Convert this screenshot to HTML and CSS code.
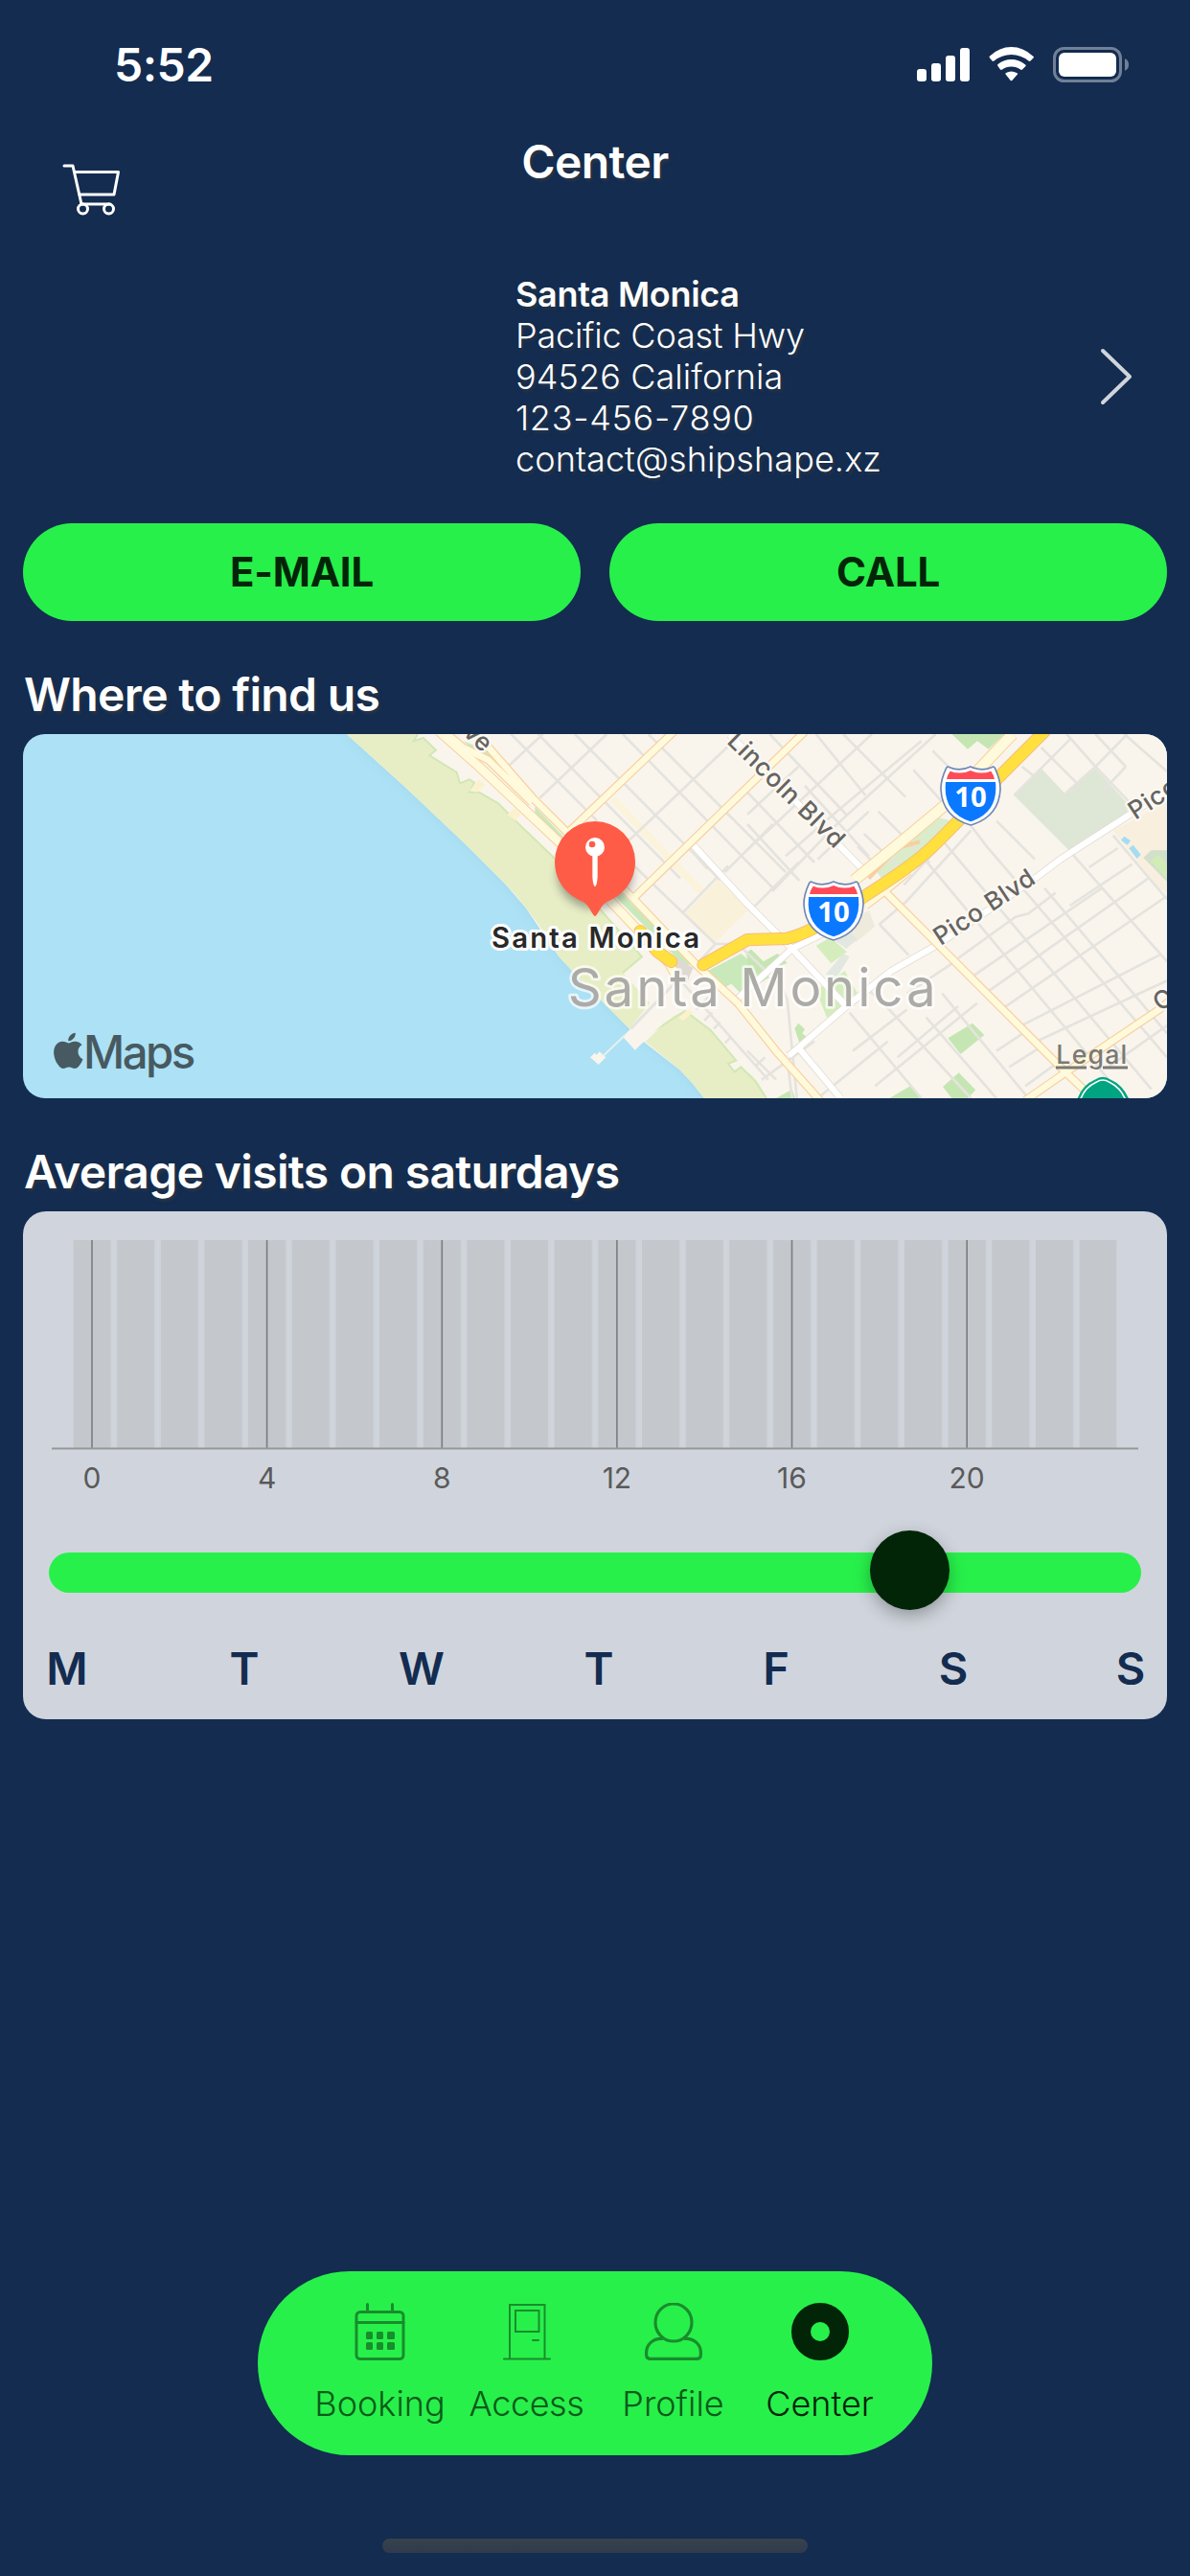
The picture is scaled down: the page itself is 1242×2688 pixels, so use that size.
FILE: index.html
```html
<!DOCTYPE html>
<html lang="en">
<head>
    <meta charset="UTF-8">
    <meta name="viewport" content="width=device-width, initial-scale=1.0">
    <title>Center</title>
    <link rel="stylesheet" href="styles.css">
</head>
<body>
    <div class="status-bar">
        <div class="time">5:52</div>
        <svg class="status-icons" viewBox="0 0 222 40">
            <g fill="#fff">
                <rect x="0" y="24" width="10" height="13" rx="3"/>
                <rect x="15" y="18" width="10" height="19" rx="3"/>
                <rect x="30" y="10" width="10" height="27" rx="3"/>
                <rect x="45" y="2" width="10" height="35" rx="3"/>
                <path d="M76 12.500Q75 11.500 76 10.500Q86 1 98.500 1T121 10.500Q123 11.500 121.500 12.500L118.500 15.600Q117.500 16.500 116.500 15.600Q108.500 9 98.500 9T80.500 15.600Q79.500 16.500 78.500 15.600Z"/>
                <path d="M84.500 21Q83.500 20 84.500 19Q91 14 98.500 14T112.500 19Q114.500 20 113.500 21L110 24.500Q109 25.300 108 24.500Q104 21.500 98.500 21.500T89 24.500Q88 25.300 87 24.500Z"/>
                <path d="M92.500 29.500Q92 28.500 93 28Q98.500 25 104 28Q106 28.500 105 29.500L99.500 35.700Q98.500 37 97.500 35.700Z"/>
                <rect x="148" y="7" width="60" height="25" rx="6"/>
            </g>
            <g opacity=".4">
                <rect x="143.500" y="2.500" width="69" height="34" rx="10" fill="none" stroke="#fff" stroke-width="3"/>
                <path d="M217 13Q221 15 221 19.500T217 26Z" fill="#fff"/>
            </g>
        </svg>
    </div>

    <div class="nav">
        <svg class="cart" viewBox="0 0 62 56" fill="none" stroke="#fff" stroke-width="3" stroke-linecap="round" stroke-linejoin="round">
            <path d="M2 3H11L20 43H50M13 9.500H58.500L54 33H17.500"/>
            <circle cx="21.500" cy="48" r="5"/>
            <circle cx="48.500" cy="48" r="5"/>
        </svg>
        <div class="nav-title">Center</div>
    </div>

    <div class="contact">
        <div class="address">
            <div class="name">Santa Monica</div>
            <div>Pacific Coast Hwy</div>
            <div class="zip">94526 California</div>
            <div class="phone">123-456-7890</div>
            <div class="mail">contact@shipshape.xz</div>
        </div>
        <svg class="chevron" viewBox="0 0 34 60" fill="none" stroke="#d0d5dc" stroke-width="4" stroke-linecap="round" stroke-linejoin="round">
            <path d="M3 3L31 30L3 57"/>
        </svg>
    </div>

    <div class="buttons">
        <button class="email">E-MAIL</button>
        <button class="call">CALL</button>
    </div>

    <h2 class="find">Where to find us</h2>
    <svg class="map" viewBox="-948 48 3582 1140">
        <defs>
            <g id="interstate">
                <path d="M-66-90Q-34-76 0-92Q34-76 66-90Q72-94 76-88Q94-50 93-20Q88 66 0 91Q-88 66-93-20Q-94-50-76-88Q-72-94-66-90Z" fill="#fff" stroke="#6f87b5" stroke-width="5"/>
                <path d="M-75-53Q-74-64-64-78Q-30-66 0-80Q30-66 64-78Q74-64 75-53Z" fill="#ff4b57"/>
                <path d="M-78-44H78Q88 52 0 80Q-88 52-78-44Z" fill="#0b79ff"/>
                <text class="shield-num" x="0" y="34" text-anchor="middle">10</text>
            </g>
            <filter id="soft" x="-50%" y="-50%" width="200%" height="200%">
                <feGaussianBlur stdDeviation="14"/>
            </filter>
        </defs>

        <!-- water, land, beach -->
        <rect x="-948" y="48" width="3582" height="1140" fill="#ade1f5"/>
        <path d="M65 48L250 215L440 395L560 515L625 590L730 745L800 820L950 970L1000 1015L1110 1100L1185 1188H1500V48Z" fill="#9ad3e8" opacity=".6" filter="url(#soft)"/>
        <path d="M65 48L250 215L440 395L560 515L625 590L730 745L800 820L950 970L1000 1015L1110 1100Q1150 1140 1185 1188H2634V48Z" fill="#f9f5ed"/>
        <g fill="#e7eec5">
            <path d="M65 48L250 215L440 395L560 515Q600 555 625 590Q690 670 730 745L800 820L950 970L1015 890L930 795L990 745L730 450L600 325L540 265L480 230L450 230L465 200L450 190L420 202L410 168L325 115L345 98L305 60L275 70L288 48Z"/>
            <path d="M1000 1010L1090 930L1125 915L1205 975L1285 1070L1260 1080L1280 1105L1300 1090L1345 1135L1380 1188H1185Q1150 1140 1110 1100Z"/>
            <path d="M1320 1105Q1365 1140 1375 1188H1320Z"/>
        </g>
        <path d="M288 48L275 70L305 60L345 98L325 115L410 168L420 202L450 190L465 200L450 230H480L540 265L600 325L730 450L990 745L930 795M1015 985L1125 915L1205 975L1285 1070L1260 1080L1280 1105L1300 1090L1345 1135L1380 1188" fill="none" stroke="#d2e7b4" stroke-width="6"/>
        <g fill="#fbf2cd">
            <path d="M450 225L480 190L500 208L472 230Z"/>
            <path d="M568 300L590 280L610 300L595 320Z"/>
            <path d="M1105 935L1135 908L1150 920L1118 946Z"/>
            <path d="M890 255L910 245L1185 535L1168 550Z" opacity=".6"/>
        </g>
        <path d="M930 995L1090 835L1115 900L968 1037ZM828 1060L842 1046L848 1052L857 1042L877 1060L854 1083Z" fill="#f9f5ed"/>
        <path d="M935 992L868 1056" stroke="#e8f0ee" stroke-width="6"/>
        <path d="M955 970L1095 825" stroke="#e5e3de" stroke-width="9"/>

        <!-- parks and blocks -->
        <path d="M1125 608L1228 502L1322 600L1215 705Z" fill="#faf1da"/>
        <g fill="#cae9bb">
            <path d="M655 275L750 375H715L655 300Z"/>
            <path d="M430 70L510 100L645 240V255L520 145Z"/>
            <path d="M910 530L1150 770H1120L910 560Z"/>
            <path d="M1195 790L1300 735L1390 810L1300 860L1270 830L1240 845Z"/>
            <path d="M1315 740L1332 722L1385 775L1360 800Z"/>
        </g>
        <path d="M1095 745L1150 780L1130 830L1090 790Z" fill="#dedad3"/>
        <g transform="translate(1320 0)">
            <path d="M835 240L920 155L995 235L1090 155L1190 265V310L1010 415Z" fill="#dee6d6"/>
            <path d="M1145 350L1314 258V550L1290 530Z" fill="#f8efdf"/>
            <path d="M1240 435L1265 412H1314V510Z" fill="#d2dfcb"/>
            <path d="M1262 445L1285 425L1314 452V500Z" fill="#d2ecb8"/>
            <path d="M1170 380L1180 368L1200 382L1190 395ZM1195 405L1208 395L1232 425L1220 438Z" fill="#a3dcf3"/>
            <path d="M215 710L260 685L312 730L262 766Z" fill="#d5edbd"/>
            <path d="M290 650L380 600L400 650L340 700Z" fill="#eeebdc"/>
            <path d="M275 695L320 665L345 690L310 720ZM245 800L300 735L320 745L270 825Z" fill="#e2e8df"/>
            <path d="M215 850L305 790L345 860L250 938Z" fill="#d5edbd"/>
            <g fill="#c5e6b2">
                <path d="M640 48H805L755 95L720 70L690 95Z"/>
                <path d="M628 1000L705 953L742 990L668 1050Z"/>
                <path d="M612 1152L662 1108L715 1162L690 1188H640Z"/>
                <path d="M445 1188L510 1150L548 1188Z"/>
                <path d="M148 970L160 953L180 972L172 985L190 1000L165 1020Z"/>
                <path d="M90 1188L140 1160L150 1188Z"/>
                <path d="M400 470L600 310L680 330L560 440L420 500Z" opacity=".6"/>
                <path d="M0 730L12 722L50 760L95 735L125 765L30 800L0 770Z"/>
            </g>
        </g>

        <!-- minor streets -->
        <g class="minor">
            <path d="M570 150L680 48M670 248L880 48M950 380L1300 48M1195 470L1160 430M1250 480L1400 330M1115 610L1260 460M1340 590L1480 450"/>
            <path d="M580 48L850 320M665 48L1110 500M780 48L1235 505M930 48L1400 530M1010 48L1440 480M960 455L1220 705M1160 770L1220 705H1290L1390 800"/>
            <path d="M1120 830L1385 1130M1185 945L1210 920M1215 970L1235 950M1250 1015L1270 995M1348 1085L1375 1060M1160 910L1200 870"/>
            <path d="M1390 48L1630 300M1535 48L1690 240M1620 48L1815 245M1320 230L1530 450M1320 330L1483 507M1500 210L1700 430M1730 290L1890 450M1685 360L1790 460M1665 400L1740 475M1840 160L1930 260M1900 100L2000 200"/>
            <path d="M1320 410L1710 48M1320 300L1480 150M1398 540L1590 340L1910 48M1440 430L1600 290L1865 70M1540 440L1700 290"/>
        </g>
        <g class="minor" transform="translate(1320 0)">
            <path d="M555 440L1180 1188M610 380L1265 1160M700 335L750 400L1314 1060M780 320L900 440M930 530L1314 985M1010 415L1314 760M1145 365L1314 565M860 150L910 190M920 90L1030 200M1000 48L1090 150L1200 265M1090 48L1185 150M1180 48L1314 165M1185 150L1110 230"/>
            <path d="M700 350L500 570L412 645M620 380L490 520M1090 150L1190 48M995 235L1090 150M835 240L1010 65M1070 465L1160 405M1010 585L1205 455M660 750L840 620L880 610L965 545M700 810L1110 530M745 860L1255 500M795 910L1314 555M850 965L1290 740M905 1010L1314 820M1130 1090L1314 960"/>
            <path d="M415 645L505 740M610 860L880 1188M560 935L780 1188M320 920L545 1188M380 850L435 900L700 1188M500 860L650 760M400 1150L720 890M470 1060L660 900M330 1040L500 910M780 1040L870 980M820 1090L915 1030M870 1150L960 1085M230 1180L440 1010M280 1140L390 1050M0 1040L90 1130M45 1130L210 1010M90 790L125 880L155 1188M125 1070L140 1188"/>
        </g>

        <!-- white roads -->
        <g fill="none" stroke-linejoin="round">
            <g stroke="#e3ddd2" stroke-width="24">
                <path d="M1150 395L1320 580L1460 720L1630 900M1480 1030L1630 900L1770 790L1920 705L2220 500L2300 440L2634 225M1280 885L1460 720L1560 670M1450 1055L1480 1030L1612 1188M1265 50L1690 480"/>
            </g>
            <g stroke="#fff" stroke-width="19">
                <path d="M1150 395L1320 580L1460 720L1630 900M1480 1030L1630 900L1770 790L1920 705L2220 500L2300 440L2634 225M1280 885L1460 720L1560 670M1450 1055L1480 1030L1612 1188M1265 50L1690 480"/>
            </g>
        </g>

        <!-- arterial roads: casing then fill -->
        <g fill="none" stroke="#f8cfa0" stroke-linejoin="round">
            <path d="M355 40L480 150L740 395L900 580L1075 765L1110 830" stroke-width="32"/>
            <path d="M510 90L650 250L760 360L960 560L1160 770L1290 890L1410 1040L1550 1198M380 48L430 90L510 130L645 262M760 355L1090 40M965 560L1500 40M1750 540L1920 710L2320 1110L2420 1205M2190 1195L2320 1105L2610 910L2640 885M1690 585L1750 540L1825 478" stroke-width="27"/>
            <path d="M1655 505L1820 370L1940 270L2150 48" stroke-width="38"/>
            <path d="M1700 500L1790 405L1860 385" stroke-width="12"/>
        </g>
        <g fill="none" stroke="#fefadb" stroke-linejoin="round">
            <path d="M355 40L480 150L740 395L900 580L1075 765L1110 830" stroke-width="26"/>
            <path d="M510 90L650 250L760 360L960 560L1160 770L1290 890L1410 1040L1550 1198M380 48L430 90L510 130L645 262M760 355L1090 40M965 560L1500 40M1750 540L1920 710L2320 1110L2420 1205M2190 1195L2320 1105L2610 910L2640 885M1690 585L1750 540L1825 478" stroke-width="20"/>
            <path d="M1655 505L1820 370L1940 270L2150 48" stroke-width="32"/>
        </g>

        <!-- freeway -->
        <g fill="none" stroke-linecap="round" stroke-linejoin="round">
            <path d="M985 665L1040 730L1082 760M1182 770L1320 692L1445 688Q1480 680 1530 655L1680 560Q1830 465 1890 410Q1960 345 2110 180L2250 40" stroke="#f7bd7c" stroke-width="40"/>
            <path d="M985 665L1040 730L1082 760M1182 770L1320 692L1445 688Q1480 680 1530 655L1680 560Q1830 465 1890 410Q1960 345 2110 180L2250 40" stroke="#ffe03e" stroke-width="34"/>
        </g>

        <!-- labels -->
        <text class="road" transform="translate(492 108) rotate(43)" text-anchor="end">Ave</text>
        <text class="road" transform="translate(1253 74) rotate(44.500)" textLength="478">Lincoln Blvd</text>
        <text class="road" transform="translate(1925 712) rotate(-33.500)" textLength="362">Pico Blvd</text>
        <text class="road" transform="translate(2535 318) rotate(-33.500)" textLength="362">Pico Blvd</text>
        <text class="road" transform="translate(2612 918) rotate(-33.500)">Ocean Park</text>
        <text class="city" x="758" y="900" textLength="1152">Santa Monica</text>
        <use href="#interstate" x="2019" y="242"/>
        <use href="#interstate" x="1590" y="602"/>
        <path d="M2355 1195Q2370 1150 2410 1133Q2433 1117 2456 1133Q2495 1150 2513 1195Z" fill="#00a481" stroke="#00a481" stroke-width="7"/>
        <path d="M2362 1195Q2374 1156 2412 1138Q2433 1124 2454 1138Q2490 1156 2505 1195" fill="none" stroke="#fff" stroke-width="5"/>

        <ellipse cx="843" cy="490" rx="118" ry="105" fill="#444" opacity=".45" filter="url(#soft)"/>
        <path d="M843 618C836 618 824 580 804 572C750 550 717 505 717 447A126 126 0 0 1 969 447C969 505 936 550 882 572C862 580 850 618 843 618Z" fill="#ff5c48"/>
        <path d="M835 425H851V495Q849 524 843 525Q837 524 835 495Z" fill="#fff"/>
        <circle cx="843" cy="402" r="30" fill="#fff"/>
        <circle cx="834" cy="393" r="10" fill="#ff5c48"/>
        <text class="place" x="519" y="717" textLength="651">Santa Monica</text>

        <path transform="translate(-862 983) scale(4.660)" fill="#475a61" d="M12.152 6.896c-.948 0-2.415-1.078-3.960-1.040-2.040.027-3.910 1.183-4.961 3.014-2.117 3.675-.546 9.103 1.519 12.090 1.013 1.454 2.208 3.090 3.792 3.039 1.520-.065 2.090-.987 3.935-.987 1.831 0 2.350.987 3.960.948 1.637-.026 2.676-1.480 3.676-2.948 1.156-1.688 1.636-3.325 1.662-3.415-.039-.013-3.182-1.221-3.220-4.857-.026-3.040 2.480-4.494 2.597-4.559-1.429-2.090-3.623-2.324-4.390-2.376-2-.156-3.675 1.090-4.610 1.090zM15.530 3.830c.843-1.012 1.400-2.427 1.245-3.830-1.207.052-2.662.805-3.532 1.818-.780.896-1.454 2.338-1.273 3.714 1.338.104 2.715-.688 3.559-1.701"/>
        <text class="brand" x="-759" y="1094" textLength="352">Maps</text>
        <text class="legal" x="2287" y="1079" textLength="222">Legal</text>
        <path d="M2286 1092H2382M2433 1092H2511" stroke="#7b7974" stroke-width="9"/>
    </svg>

    <h2 class="visits">Average visits on saturdays</h2>
    <div class="card">
        <svg class="chart" viewBox="0 0 1194 300">
            <defs>
                <pattern id="bars" x="52.500" width="45.660" height="218" patternUnits="userSpaceOnUse">
                    <rect width="45.660" height="218" fill="#ced4d9"/>
                    <rect width="39" height="218" fill="#c4c7cc"/>
                    <rect x="41" width="3" height="218" fill="#d0d5dd"/>
                </pattern>
            </defs>
            <rect x="52.500" y="30" width="1089" height="217" fill="url(#bars)"/>
            <path d="M72 30V247M254.600 30V247M437.300 30V247M619.900 30V247M802.500 30V247M985.200 30V247" stroke="#7b7d80" stroke-width="1.600"/>
            <path d="M30 247.500H1164" stroke="#95989a" stroke-width="2"/>
            <g class="ticks">
                <text x="72" y="289">0</text>
                <text x="254.600" y="289">4</text>
                <text x="437.300" y="289">8</text>
                <text x="619.900" y="289">12</text>
                <text x="802.500" y="289">16</text>
                <text x="985.200" y="289">20</text>
            </g>
        </svg>
        <div class="slider">
            <div class="knob"></div>
        </div>
        <div class="days">
            <span>M</span><span>T</span><span>W</span><span>T</span><span>F</span><span>S</span><span>S</span>
        </div>
    </div>

    <div class="tab-bar">
        <div class="tab">
            <svg viewBox="0 0 60 60" fill="none" stroke="currentColor" stroke-width="3">
                <rect x="5" y="9.500" width="49" height="49" rx="4"/>
                <path d="M5 20.500H54M16.500 1.500V9M42.500 1.500V9" stroke-linecap="round"/>
                <g fill="currentColor" stroke="none">
                    <rect x="15" y="30" width="7" height="8" rx="1.500"/>
                    <rect x="26" y="30" width="7" height="8" rx="1.500"/>
                    <rect x="37" y="30" width="8" height="8" rx="1.500"/>
                    <rect x="15" y="41" width="7" height="8" rx="1.500"/>
                    <rect x="26" y="41" width="7" height="8" rx="1.500"/>
                    <rect x="37" y="41" width="8" height="8" rx="1.500"/>
                </g>
            </svg>
            <span>Booking</span>
        </div>
        <div class="tab access">
            <svg viewBox="0 0 60 60" fill="none" stroke="currentColor" stroke-width="2">
                <path d="M12 58V2H48.500V58M18 8H42.500V30H18ZM36 39H42M6 58.500H54" stroke-linecap="round"/>
            </svg>
            <span>Access</span>
        </div>
        <div class="tab profile">
            <svg viewBox="0 0 60 60" fill="none" stroke="currentColor" stroke-width="3.200">
                <ellipse cx="30" cy="20.500" rx="19" ry="19.500"/>
                <path d="M19 37.500C8 36.500 1.600 44 1.600 52V54Q1.600 58.400 6 58.400H54Q58.400 58.400 58.400 54V52C58.400 44 52 36.500 41 37.500"/>
            </svg>
            <span>Profile</span>
        </div>
        <div class="tab active">
            <svg viewBox="0 0 60 60" fill="none" stroke="currentColor">
                <circle cx="30" cy="30" r="20" stroke-width="20"/>
            </svg>
            <span>Center</span>
        </div>
    </div>
    <div class="home-indicator"></div>
</body>
</html>
```
FILE: styles.css
```css
* {
    box-sizing: border-box;
}

body {
    font-family: Inter, Roboto, sans-serif;
    background-color: #132c50;
    color: white;
    display: flex;
    flex-direction: column;
    width: 1242px;
    height: 2688px;
    margin: 0;
    overflow: hidden;
}

svg {
    display: block;
    flex: none;
}

.status-bar {
    display: flex;
    justify-content: space-between;
    height: 136px;
    padding: 39px 63px 0 119px;
}

.time {
    font-size: 48px;
    font-weight: 600;
    line-height: 58px;
    letter-spacing: -0.5px;
}

.status-icons {
    width: 222px;
    height: 40px;
    margin-top: 9px;
}

.nav {
    display: grid;
    grid-template-columns: 1fr auto 1fr;
    height: 150px;
    padding: 4px 65px 0;
}

.cart {
    width: 62px;
    height: 56px;
    margin-top: 30px;
}

.nav-title {
    font-size: 48px;
    font-weight: 600;
    line-height: 58px;
    letter-spacing: -0.6px;
    text-shadow: 2px 3px 3px rgba(60, 60, 60, 0.5);
}

.contact {
    display: flex;
    justify-content: space-between;
    height: 260px;
    padding: 0 60px 0 538px;
}

.address {
    font-size: 36px;
    font-weight: 300;
    line-height: 43px;
    letter-spacing: -0.2px;
    text-shadow: 2px 3px 3px rgba(60, 60, 60, 0.5);
}

.address .name {
    font-weight: 600;
    letter-spacing: -0.3px;
}

.address .zip, .address .mail {
    letter-spacing: 0.1px;
}

.address .phone {
    letter-spacing: 0.7px;
}

.chevron {
    width: 34px;
    height: 60px;
    margin-top: 77px;
}

.buttons {
    display: flex;
    gap: 30px;
    padding: 0 24px;
}

button {
    flex: 1;
    height: 102px;
    border: none;
    border-radius: 51px;
    background-color: #28f04b;
    color: #022508;
    font-family: inherit;
    font-size: 42px;
    font-weight: 700;
    letter-spacing: -0.2px;
    padding: 0 0 2px;
}

h2 {
    font-size: 48px;
    font-weight: 600;
    line-height: 58px;
    letter-spacing: -0.65px;
    height: 70px;
    margin: 48px 24px 0 25px;
    text-shadow: 2px 3px 3px rgba(60, 60, 60, 0.5);
}

.map {
    width: 1194px;
    height: 380px;
    margin-left: 24px;
    border-radius: 23px;
}

.map text {
    stroke-linejoin: round;
    paint-order: stroke;
}

.minor {
    fill: none;
    stroke: #e5e3de;
    stroke-width: 8px;
}

.road {
    font-size: 78px;
    font-weight: 500;
    fill: #66645f;
    stroke: #fbf8f3;
    stroke-width: 14px;
}

.city {
    font-size: 164px;
    fill: #adaba7;
    stroke: rgba(255, 255, 255, 0.7);
    stroke-width: 16px;
}

.place {
    font-size: 88px;
    font-weight: 600;
    fill: #292929;
    stroke: #fff;
    stroke-width: 18px;
}

.shield-num {
    font-family: "Open Sans", sans-serif;
    font-size: 88px;
    font-weight: 700;
    fill: #fff;
}

.brand {
    font-size: 142px;
    font-weight: 500;
    fill: #475a61;
}

.legal {
    font-size: 80px;
    font-weight: 500;
    fill: #7b7974;
}

.card {
    height: 530px;
    margin: 0 24px;
    border-radius: 24px;
    background-color: #d0d5dd;
    color: #132c50;
}

.chart {
    width: 1194px;
    height: 300px;
}

.ticks {
    font-size: 30px;
    fill: #5a5a5a;
    text-anchor: middle;
}

.slider {
    display: flex;
    align-items: center;
    width: 1140px;
    height: 42px;
    margin: 56px 0 0 27px;
    padding-left: 857px;
    border-radius: 21px;
    background-color: #28f04b;
}

.knob {
    width: 83px;
    height: 83px;
    margin-top: -5px;
    border-radius: 50%;
    background-color: #022508;
    box-shadow: 0 6px 18px rgba(0, 0, 0, 0.3);
}

.days {
    display: flex;
    justify-content: space-between;
    margin: 50px 20px 0 28px;
    font-size: 47px;
    font-weight: 600;
    line-height: 57px;
}

.days span {
    display: flex;
    justify-content: center;
    width: 36px;
}

.tab-bar {
    display: flex;
    width: 704px;
    height: 192px;
    margin: auto auto 0;
    padding: 33px 41px 0 51px;
    border-radius: 96px;
    background-color: #28f04b;
}

.tab {
    display: flex;
    flex-direction: column;
    align-items: center;
    gap: 23px;
    width: 153px;
    color: #188d2c;
    font-size: 36px;
    font-weight: 300;
    line-height: 44px;
}

.tab svg {
    width: 60px;
    height: 60px;
}

.tab span {
    color: #0b5b1a;
}

.tab.access span {
    letter-spacing: -0.4px;
}

.tab.active, .tab.active span {
    color: #022508;
}

.home-indicator {
    width: 444px;
    height: 15px;
    margin: 87px auto 24px;
    border-radius: 8px;
    background: linear-gradient(#38424c, #2f3b4d);
}
```
